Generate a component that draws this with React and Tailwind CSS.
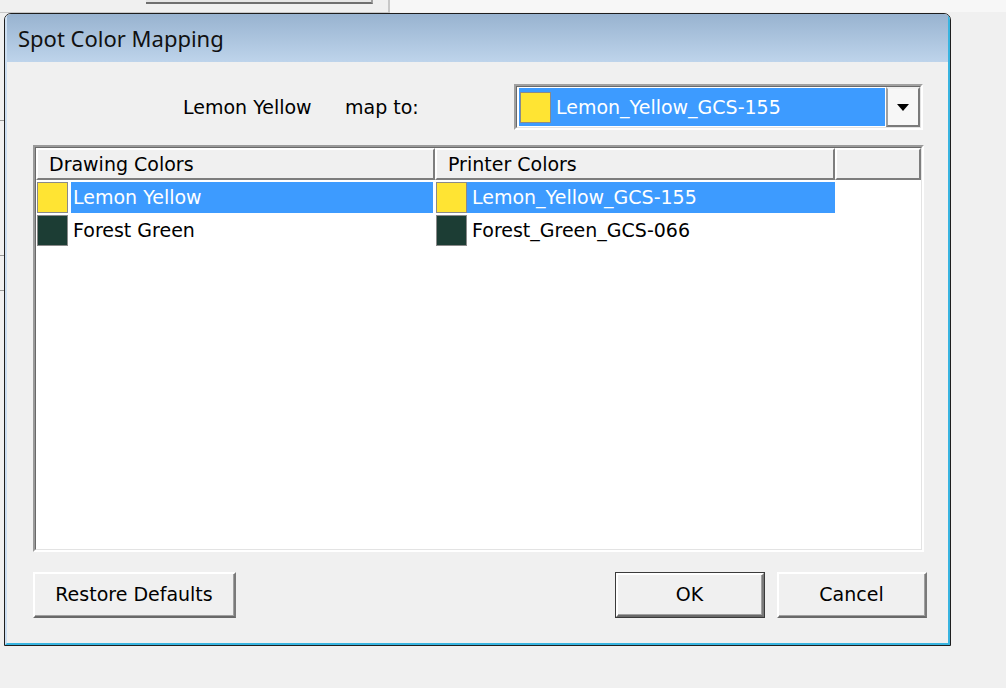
import React from "react";

const font = { fontFamily: '"DejaVu Sans", "Liberation Sans", sans-serif' };

const rows = [
    { name: "Lemon Yellow", printer: "Lemon_Yellow_GCS-155", swatch: "bg-[#ffe433]", selected: true },
    { name: "Forest Green", printer: "Forest_Green_GCS-066", swatch: "bg-[#1c3d34]", selected: false },
];

const Swatch = ({ color }) => (
    <div className={`w-[31px] h-[31px] shrink-0 border border-[#8a8a8a] ${color}`} />
);

const Button = ({ children, width, isDefault }) => (
    <div className={`${width} h-[46px] ${isDefault ? "border border-[#3a3a3a]" : ""}`}>
        <div className="h-full border-t-2 border-l-2 border-t-white border-l-white border-b-2 border-r-2 border-b-[#696969] border-r-[#7a7a7a]">
            <div className="h-full flex items-center justify-center bg-[#f0f0f0] border-b border-r border-b-[#a0a0a0] border-r-[#a0a0a0] text-[19px] text-black">
                {children}
            </div>
        </div>
    </div>
);

const HeaderCell = ({ children, width }) => (
    <div className={`${width} h-full shrink-0 flex items-center pl-[11px] bg-[#f0f0f0] border-t-2 border-l-2 border-t-white border-l-white border-b-2 border-r-2 border-b-[#7d7d7d] border-r-[#7d7d7d] text-[19px] text-black`}>
        {children}
    </div>
);

const SpotColorDialog = () => {
    return (
        <div className="w-[947px] h-[633px] flex flex-col border border-[#1e1e1e] rounded-t-[7px] overflow-hidden">
            <div className="flex flex-col flex-1 border-l-2 border-l-[#cddff2] border-r-2 border-r-[#38b4e0] border-b-2 border-b-[#38b4e0]">
                {/* title bar */}
                <div className="h-[48px] shrink-0 flex items-center pl-[11px] bg-linear-to-b from-[#98b3d0] to-[#bed4eb]">
                    <span className="text-[22px] text-[#111]" style={{ fontFamily: '"Noto Sans", "Open Sans", sans-serif' }}>
                        Spot Color Mapping
                    </span>
                </div>

                <div className="flex-1 flex flex-col bg-[#f0f0f0] pl-[26px] pt-[22px]">
                    {/* mapping row */}
                    <div className="flex items-center h-[46px]">
                        <span className="w-[150px]" />
                        <span className="w-[162px] text-[19px] text-black">Lemon Yellow</span>
                        <span className="w-[169px] text-[19px] text-black">map to:</span>
                        <div className="w-[409px] h-[46px] border-2 border-t-[#a0a0a0] border-l-[#a0a0a0] border-b-white border-r-white">
                            <div className="h-full flex bg-white border border-t-[#696969] border-l-[#696969] border-b-[#e3e3e3] border-r-[#e3e3e3]">
                                <div className="flex-1 flex items-center pl-[2px] py-[1px]">
                                    <div className="w-[366px] h-full flex items-center bg-[#3d9bff] pl-[1px]">
                                        <Swatch color="bg-[#ffe433]" />
                                        <span className="pl-[5px] text-[19px] text-white">Lemon_Yellow_GCS-155</span>
                                    </div>
                                </div>
                                <div className="w-[34px] h-full flex items-center justify-center bg-[#f7f7f7] border-2 border-t-[#f0f0f0] border-l-[#a0a0a0] border-b-[#7a7a7a] border-r-[#7a7a7a]">
                                    <svg width="12" height="7" viewBox="0 0 12 7">
                                        <path d="M0 0 H12 L6 7 Z" fill="#000" />
                                    </svg>
                                </div>
                            </div>
                        </div>
                    </div>

                    {/* list view */}
                    <div className="mt-[15px] w-[891px] h-[407px] border-2 border-t-[#9a9a9a] border-l-[#9a9a9a] border-b-white border-r-white">
                        <div className="h-full bg-white border border-t-[#696969] border-l-[#696969] border-b-[#e3e3e3] border-r-[#e3e3e3]">
                            <div className="flex h-[32px]">
                                <HeaderCell width="w-[399px]">Drawing Colors</HeaderCell>
                                <HeaderCell width="w-[400px]">Printer Colors</HeaderCell>
                                <HeaderCell width="flex-1" />
                            </div>
                            <div className="flex flex-col pt-[1px]">
                                {rows.map((r) => (
                                    <div key={r.name} className="flex h-[33px] items-center">
                                        <div className="w-[399px] h-full flex items-center pl-[1px] pr-[2px]">
                                            <Swatch color={r.swatch} />
                                            <div className={`ml-[3px] flex-1 h-[31px] flex items-center pl-[2px] text-[19px] ${r.selected ? "bg-[#3d9bff] text-white" : "text-black"}`}>
                                                {r.name}
                                            </div>
                                        </div>
                                        <div className={`w-[400px] h-full flex items-center pl-[1px] ${r.selected ? "" : ""}`}>
                                            <Swatch color={r.swatch} />
                                            <div className={`flex-1 h-[31px] flex items-center pl-[5px] text-[19px] ${r.selected ? "bg-[#3d9bff] text-white" : "text-black"}`}>
                                                {r.printer}
                                            </div>
                                        </div>
                                    </div>
                                ))}
                            </div>
                        </div>
                    </div>

                    {/* buttons */}
                    <div className="mt-[20px] flex items-center pr-[21px]">
                        <Button width="w-[203px]">Restore Defaults</Button>
                        <div className="flex-1" />
                        <Button width="w-[150px]" isDefault>OK</Button>
                        <div className="w-[12px]" />
                        <Button width="w-[150px]">Cancel</Button>
                    </div>
                </div>
            </div>
        </div>
    );
};

const App = () => {
    return (
        <div className="relative w-[1006px] h-[688px] overflow-hidden bg-[#f0f0f0]" style={font}>
            {/* window underneath */}
            <div className="absolute left-[146px] top-[-10px] w-[227px] h-[14px] bg-[#e6e6e6] border-b-2 border-r-2 border-b-[#6f6f6f] border-r-[#a0a0a0]" />
            <div className="absolute left-[388px] top-0 w-[2px] h-[12px] bg-[#c8c8c8]" />
            <div className="absolute left-[390px] top-0 w-[616px] h-[12px] bg-[#f7f7f7]" />
            <div className="absolute left-0 top-[12px] w-[390px] h-[1px] bg-[#c8c8c8]" />
            <div className="absolute left-0 top-[120px] w-[4px] h-[1px] bg-[#9a9a9a]" />
            <div className="absolute left-0 top-[255px] w-[4px] h-[1px] bg-[#9a9a9a]" />
            <div className="absolute left-0 top-[290px] w-[4px] h-[1px] bg-[#9a9a9a]" />

            <div className="relative pt-[13px] pl-[4px]">
                <SpotColorDialog />
            </div>
        </div>
    );
};

export default App;
